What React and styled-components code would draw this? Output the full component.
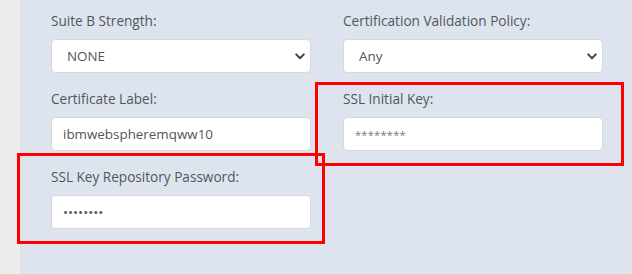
import React from "react";
import styled, { createGlobalStyle } from "styled-components";

const Global = createGlobalStyle`
  html, body { margin: 0; padding: 0; }
  body {
    width: 632px;
    height: 274px;
    overflow: hidden;
    font-family: "Open Sans", "Noto Sans", sans-serif;
  }
`;

const Page = styled.div`
  display: flex;
  width: 632px;
  height: 274px;
  position: relative;
`;

const Strip = styled.div`
  width: 20px;
  flex: none;
  background: #ececec;
`;

const Panel = styled.div`
  flex: 1;
  background: #dee4ed;
  padding: 11px 0 0 31px;
`;

const Grid = styled.div`
  display: grid;
  grid-template-columns: 260px 260px;
  column-gap: 32px;
  row-gap: 16px;
`;

const Field = styled.div`
  display: flex;
  flex-direction: column;
`;

const Label = styled.label`
  font-size: 13.6px;
  line-height: 20px;
  color: #51575f;
  margin-bottom: 8px;
`;

const controlBase = `
  box-sizing: border-box;
  width: 260px;
  height: 34px;
  background: #fff;
  border: 1px solid #d3d8df;
  border-radius: 4px;
  font-family: "Open Sans", "Noto Sans", sans-serif;
  font-size: 13.4px;
  color: #555;
  outline: none;
`;

const SelectWrap = styled.div`
  position: relative;
  width: 260px;
  height: 34px;
`;

const Select = styled.select`
  ${controlBase}
  appearance: none;
  -webkit-appearance: none;
  padding: 0 0 0 15px;
`;

const Chevron = styled.svg`
  position: absolute;
  right: 6px;
  top: 14px;
  pointer-events: none;
`;

const Input = styled.input`
  ${controlBase}
  padding: 0 11px;
  color: ${(p) => (p.$mask ? "#777" : "#555")};
  font-size: ${(p) => (p.$mask ? "11px" : "13.4px")};
  letter-spacing: ${(p) => (p.$mask ? "0.3px" : "0")};
`;

const Highlight = styled.div`
  position: absolute;
  box-sizing: border-box;
  border: 3px solid #ff0000;
  pointer-events: none;
`;

function ChevronIcon() {
  return (
    <Chevron width="10" height="7" viewBox="0 0 10 7">
      <path d="M1.2 1.4 L5 5.2 L8.8 1.4" fill="none" stroke="#404448" strokeWidth="2" strokeLinecap="round" strokeLinejoin="round" />
    </Chevron>
  );
}

function SelectField({ label, value }) {
  return (
    <Field>
      <Label>{label}</Label>
      <SelectWrap>
        <Select defaultValue={value}>
          <option value={value}>{value}</option>
        </Select>
        <ChevronIcon />
      </SelectWrap>
    </Field>
  );
}

function InputField({ label, value, mask }) {
  return (
    <Field>
      <Label>{label}</Label>
      <Input type="text" defaultValue={value} readOnly $mask={mask} />
    </Field>
  );
}

export default function App() {
  return (
    <>
      <Global />
      <Page>
        <Strip />
        <Panel>
          <Grid>
            <SelectField label="Suite B Strength:" value="NONE" />
            <SelectField label="Certification Validation Policy:" value="Any" />
            <InputField label="Certificate Label:" value="ibmwebspheremqww10" />
            <InputField label="SSL Initial Key:" value="********" mask />
            <InputField label="SSL Key Repository Password:" value="••••••••" />
          </Grid>
        </Panel>
        <Highlight style={{ left: 315, top: 82, width: 309, height: 84 }} />
        <Highlight style={{ left: 17, top: 153, width: 308, height: 91 }} />
      </Page>
    </>
  );
}
